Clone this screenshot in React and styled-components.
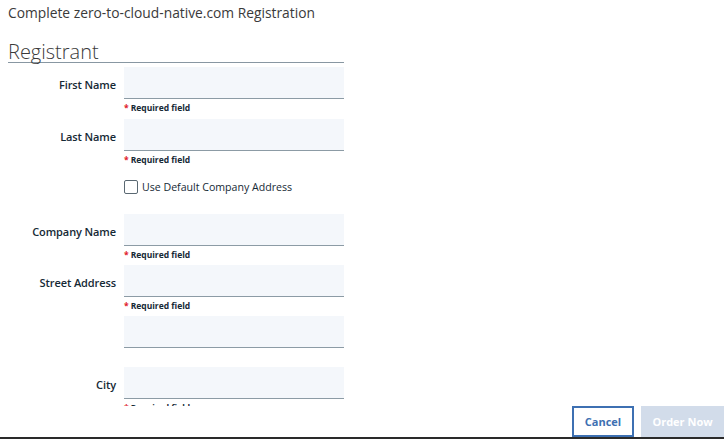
import React from "react";
import styled, { createGlobalStyle } from "styled-components";

const Global = createGlobalStyle`
  html, body { margin: 0; padding: 0; background: #fff; }
  body { font-family: "Open Sans", "Liberation Sans", sans-serif; }
  * { box-sizing: border-box; }
`;

const Page = styled.div`
  width: 724px;
  height: 439px;
  display: flex;
  flex-direction: column;
  overflow: hidden;
  border-bottom: 2px solid #2a2a2a;
`;

const Title = styled.div`
  padding: 4px 8px 0;
  font-size: 13.8px;
  line-height: 17px;
  color: #3a3a3a;
`;

const SectionHeading = styled.h2`
  margin: 20px 0 0 8px;
  width: 336px;
  height: 22px;
  font-size: 20px;
  line-height: 22px;
  font-weight: 300;
  color: #3a3a3a;
  border-bottom: 1px solid #8897a2;
`;

const ScrollArea = styled.div`
  flex: 1;
  overflow: hidden;
  padding-top: 4px;
`;

const Form = styled.div`
  display: grid;
  grid-template-columns: 116px 220px;
  column-gap: 8px;
`;

const Label = styled.label`
  text-align: right;
  font-size: 11px;
  font-weight: 600;
  color: #152935;
  height: 32px;
  line-height: 36px;
  letter-spacing: -0.1px;
`;

const FieldCol = styled.div`
  display: flex;
  flex-direction: column;
`;

const Input = styled.div`
  height: 32px;
  background: #f4f7fb;
  border-bottom: 1px solid #8c9ba5;
`;

const Helper = styled.div`
  height: ${(p) => (p.$tall ? 20 : 19)}px;
  font-size: 8.5px;
  font-weight: 700;
  line-height: 17px;
  color: #152935;
  display: flex;
  gap: 2px;
`;

const Star = styled.span`
  color: #e0182d;
`;

const CheckRow = styled.div`
  grid-column: 2;
  height: 43px;
  padding-top: 9px;
  display: flex;
  align-items: flex-start;
  gap: 4px;
  font-size: 10.6px;
  color: #152935;
`;

const Box = styled.span`
  width: 14px;
  height: 14px;
  border: 1px solid #5a6872;
  border-radius: 2px;
  background: #fff;
`;

const CheckText = styled.span`
  line-height: 14px;
`;

const Footer = styled.div`
  height: 31px;
  display: flex;
  justify-content: flex-end;
  gap: 7px;
`;

const Button = styled.button`
  height: 31px;
  width: ${(p) => p.$w}px;
  font-family: inherit;
  font-size: 11px;
  font-weight: 700;
  padding: 0;
  cursor: pointer;
  border: ${(p) => (p.$primary ? "none" : "2px solid #3d70b2")};
  background: ${(p) => (p.$primary ? "#d2dcea" : "#fff")};
  color: ${(p) => (p.$primary ? "#fff" : "#3d70b2")};
`;

const Field = ({ label, required = true, tall }) => (
  <>
    <Label>{label}</Label>
    <FieldCol>
      <Input />
      <Helper $tall={tall}>
        {required && (
          <>
            <Star>*</Star>
            <span>Required field</span>
          </>
        )}
      </Helper>
    </FieldCol>
  </>
);

export default function App() {
  return (
    <Page>
      <Global />
      <Title>Complete zero-to-cloud-native.com Registration</Title>
      <SectionHeading>Registrant</SectionHeading>
      <ScrollArea>
        <Form>
          <Field label="First Name" tall />
          <Field label="Last Name" tall />
          <CheckRow>
            <Box />
            <CheckText>Use Default Company Address</CheckText>
          </CheckRow>
          <Field label="Company Name" />
          <Field label="Street Address" />
          <Field label="" required={false} />
          <Field label="City" />
        </Form>
      </ScrollArea>
      <Footer>
        <Button $w={62}>Cancel</Button>
        <Button $w={83} $primary>Order Now</Button>
      </Footer>
    </Page>
  );
}
